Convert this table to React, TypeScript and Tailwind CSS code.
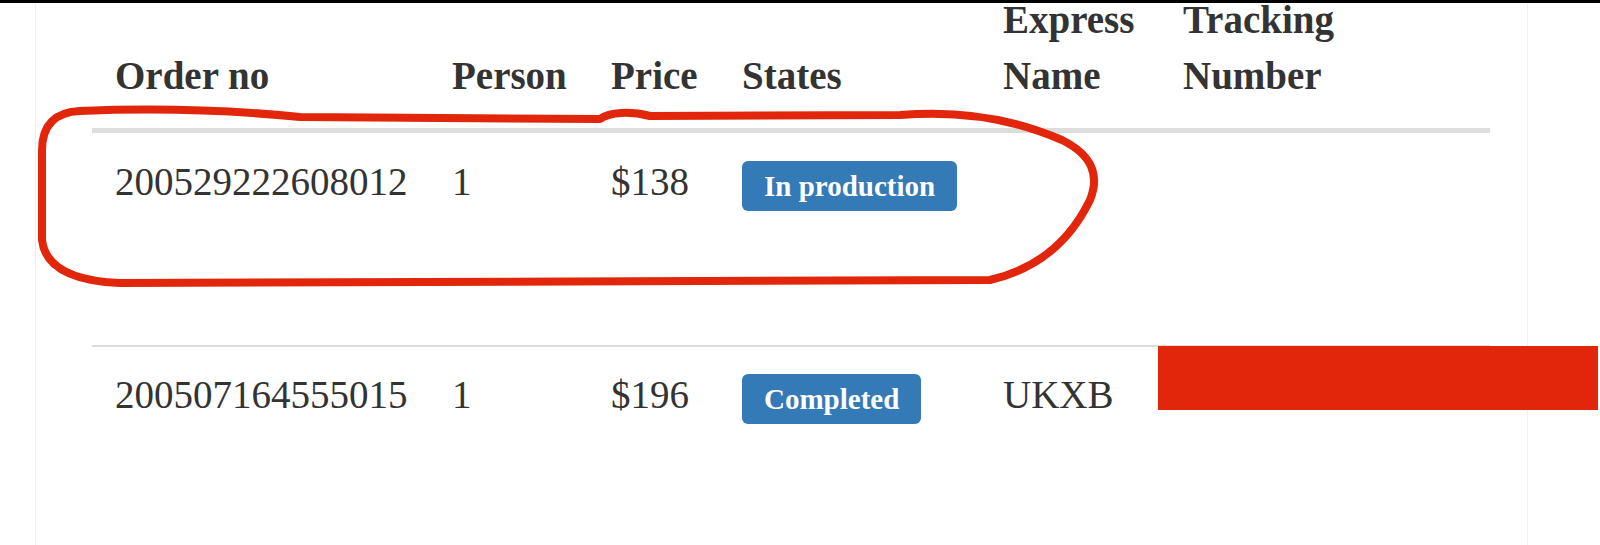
import React from "react";

type Order = {
  no: string;
  person: string;
  price: string;
  state: string;
  express: string;
};

const ORDERS: Order[] = [
  { no: "200529222608012", person: "1", price: "$138", state: "In production", express: "" },
  { no: "200507164555015", person: "1", price: "$196", state: "Completed", express: "UKXB" },
];

const HEADERS = ["Order no", "Person", "Price", "States", "Express Name", "Tracking Number"];
const WIDTHS = ["w-[337px]", "w-[159px]", "w-[131px]", "w-[261px]", "w-[180px]", "w-[330px]"];

function Badge({ text }: { text: string }) {
  return (
    <span className="inline-block align-top mt-[7px] h-[50px] px-[22px] rounded-[6px] bg-[#337ab7] text-white font-bold text-[29px] leading-[50px] whitespace-nowrap">
      {text}
    </span>
  );
}

export default function App() {
  return (
    <div className="relative w-[1600px] h-[545px] overflow-hidden bg-white text-[#333333] font-['Liberation_Serif',_'Times_New_Roman',_serif]">
      {/* barra superior */}
      <div className="absolute top-0 left-0 w-full h-[3px] bg-black z-20" />

      {/* tarjeta */}
      <div className="flow-root ml-[35px] w-[1493px] h-full border-x border-[#f0f0f0] pl-[56px]">
        <table className="mt-[-30px] w-[1398px] table-fixed border-collapse text-[39px] leading-[56px]">
          <colgroup>
            {WIDTHS.map((w, i) => (
              <col key={i} className={w} />
            ))}
          </colgroup>
          <thead>
            <tr>
              {HEADERS.map((h) => (
                <th
                  key={h}
                  className="align-bottom text-left font-bold px-[23px] pt-[22px] pb-[24px] border-b-[5px] border-[#dddddd]"
                >
                  {h}
                </th>
              ))}
            </tr>
          </thead>
          <tbody>
            {ORDERS.map((o, i) => (
              <tr key={o.no} className={i === 0 ? "h-[215px]" : "h-[200px]"}>
                {[o.no, o.person, o.price, "badge", o.express, ""].map((v, j) => (
                  <td
                    key={j}
                    className={`align-top px-[23px] whitespace-nowrap ${
                      i === 0 ? "pt-[21px]" : "pt-[20px] border-t-2 border-[#dddddd]"
                    }`}
                  >
                    {v === "badge" ? <Badge text={o.state} /> : v}
                  </td>
                ))}
              </tr>
            ))}
          </tbody>
        </table>
      </div>

      {/* anotaciones rojas */}
      <svg
        className="absolute inset-0 pointer-events-none z-10"
        width="1600"
        height="545"
        viewBox="0 0 1600 545"
      >
        <path
          d="M 80 111 C 150 108, 230 110, 300 117 L 600 119 C 610 112, 630 111, 650 116 L 900 115 C 960 110, 1012 118, 1062 140 C 1092 155, 1100 175, 1090 200 C 1072 237, 1042 268, 990 280 L 120 283 C 70 281, 45 266, 42 240 L 42 150 C 42 125, 55 112, 80 111 Z"
          fill="none"
          stroke="#e1260b"
          strokeWidth="8"
          strokeLinejoin="round"
        />
      </svg>
      <div className="absolute left-[1158px] top-[346px] w-[440px] h-[64px] bg-[#e1260b] z-10" />
    </div>
  );
}
